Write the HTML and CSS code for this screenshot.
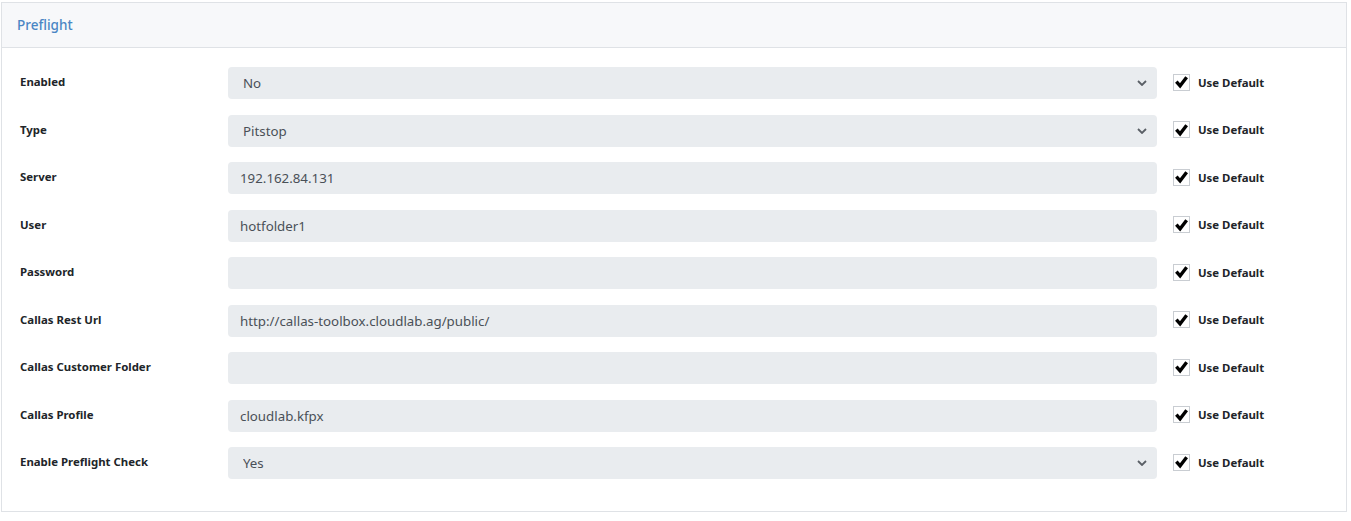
FILE: index.html
```html
<!DOCTYPE html>
<html lang="en">
<head>
<meta charset="utf-8">
<title>Preflight</title>
<link rel="stylesheet" href="styles.css">
</head>
<body>
<div class="page">
  <section class="card">
    <header class="card-header">Preflight</header>
    <div class="card-body">
      <div class="row">
        <label class="label">Enabled</label>
        <div class="select-wrap">
          <select class="control select"><option>No</option><option>Yes</option></select>
          <svg class="chev" viewBox="0 0 10 6" width="10" height="6"><polyline points="1,1 5,5 9,1" fill="none" stroke="#5a5f66" stroke-width="1.8"/></svg>
        </div>
        <div class="default"><span class="box"><svg viewBox="0 0 16 16" width="16" height="16"><polyline points="2.5,7.5 6.5,12 13.5,3" fill="none" stroke="#000" stroke-width="3.6"/></svg></span><span class="dtext">Use Default</span></div>
      </div>
      <div class="row">
        <label class="label">Type</label>
        <div class="select-wrap">
          <select class="control select"><option>Pitstop</option></select>
          <svg class="chev" viewBox="0 0 10 6" width="10" height="6"><polyline points="1,1 5,5 9,1" fill="none" stroke="#5a5f66" stroke-width="1.8"/></svg>
        </div>
        <div class="default"><span class="box"><svg viewBox="0 0 16 16" width="16" height="16"><polyline points="2.5,7.5 6.5,12 13.5,3" fill="none" stroke="#000" stroke-width="3.6"/></svg></span><span class="dtext">Use Default</span></div>
      </div>
      <div class="row">
        <label class="label">Server</label>
        <input class="control" type="text" value="192.162.84.131">
        <div class="default"><span class="box"><svg viewBox="0 0 16 16" width="16" height="16"><polyline points="2.5,7.5 6.5,12 13.5,3" fill="none" stroke="#000" stroke-width="3.6"/></svg></span><span class="dtext">Use Default</span></div>
      </div>
      <div class="row">
        <label class="label">User</label>
        <input class="control" type="text" value="hotfolder1">
        <div class="default"><span class="box"><svg viewBox="0 0 16 16" width="16" height="16"><polyline points="2.5,7.5 6.5,12 13.5,3" fill="none" stroke="#000" stroke-width="3.6"/></svg></span><span class="dtext">Use Default</span></div>
      </div>
      <div class="row">
        <label class="label">Password</label>
        <input class="control" type="password" value="">
        <div class="default"><span class="box"><svg viewBox="0 0 16 16" width="16" height="16"><polyline points="2.5,7.5 6.5,12 13.5,3" fill="none" stroke="#000" stroke-width="3.6"/></svg></span><span class="dtext">Use Default</span></div>
      </div>
      <div class="row">
        <label class="label">Callas Rest Url</label>
        <input class="control" type="text" value="http://callas-toolbox.cloudlab.ag/public/">
        <div class="default"><span class="box"><svg viewBox="0 0 16 16" width="16" height="16"><polyline points="2.5,7.5 6.5,12 13.5,3" fill="none" stroke="#000" stroke-width="3.6"/></svg></span><span class="dtext">Use Default</span></div>
      </div>
      <div class="row">
        <label class="label">Callas Customer Folder</label>
        <input class="control" type="text" value="">
        <div class="default"><span class="box"><svg viewBox="0 0 16 16" width="16" height="16"><polyline points="2.5,7.5 6.5,12 13.5,3" fill="none" stroke="#000" stroke-width="3.6"/></svg></span><span class="dtext">Use Default</span></div>
      </div>
      <div class="row">
        <label class="label">Callas Profile</label>
        <input class="control" type="text" value="cloudlab.kfpx">
        <div class="default"><span class="box"><svg viewBox="0 0 16 16" width="16" height="16"><polyline points="2.5,7.5 6.5,12 13.5,3" fill="none" stroke="#000" stroke-width="3.6"/></svg></span><span class="dtext">Use Default</span></div>
      </div>
      <div class="row">
        <label class="label">Enable Preflight Check</label>
        <div class="select-wrap">
          <select class="control select"><option>Yes</option><option>No</option></select>
          <svg class="chev" viewBox="0 0 10 6" width="10" height="6"><polyline points="1,1 5,5 9,1" fill="none" stroke="#5a5f66" stroke-width="1.8"/></svg>
        </div>
        <div class="default"><span class="box"><svg viewBox="0 0 16 16" width="16" height="16"><polyline points="2.5,7.5 6.5,12 13.5,3" fill="none" stroke="#000" stroke-width="3.6"/></svg></span><span class="dtext">Use Default</span></div>
      </div>
    </div>
  </section>
</div>
</body>
</html>
```

FILE: styles.css
```css
html, body {
  margin: 0;
  padding: 0;
  background: #ffffff;
}

body {
  font-family: "Noto Sans", "Open Sans", sans-serif;
  color: #212529;
}

.page {
  padding: 2px 4px 9px 1px;
}

.card {
  width: 1346px;
  height: 510px;
  box-sizing: border-box;
  border: 1px solid #dfe2e6;
  background: #ffffff;
}

.card-header {
  height: 45px;
  box-sizing: border-box;
  background: #f7f8fa;
  border-bottom: 1px solid #dfe2e6;
  padding: 0 15px 0 15px;
  display: flex;
  align-items: center;
  font-size: 13.5px;
  font-weight: 500;
  color: #4a86c4;
}

.card-body {
  padding: 19px 18px 0 18px;
  display: flex;
  flex-direction: column;
  gap: 15.5px;
}

.row {
  display: grid;
  grid-template-columns: 192px 929px auto;
  column-gap: 16px;
  align-items: center;
  height: 32px;
}

.label {
  font-size: 11.4px;
  font-weight: 700;
  color: #212529;
  padding-bottom: 3px;
}

.control {
  box-sizing: border-box;
  width: 929px;
  height: 32px;
  border: none;
  border-radius: 4px;
  background: #e9ecef;
  padding: 0 12px;
  font-family: inherit;
  font-size: 13.3px;
  color: #495057;
  outline: none;
}

.select-wrap {
  position: relative;
  width: 929px;
  height: 32px;
}

.select {
  appearance: none;
  -webkit-appearance: none;
  padding-left: 15px;
}

.chev {
  position: absolute;
  right: 10px;
  top: 13px;
  pointer-events: none;
}

.default {
  display: flex;
  align-items: center;
  gap: 8px;
  padding-bottom: 2px;
}

.box {
  width: 17px;
  height: 17px;
  box-sizing: border-box;
  border: 1px solid #c9cdd2;
  background: #fff;
  display: flex;
  align-items: center;
  justify-content: center;
}

.dtext {
  font-size: 11.4px;
  font-weight: 700;
  color: #212529;
}
```
